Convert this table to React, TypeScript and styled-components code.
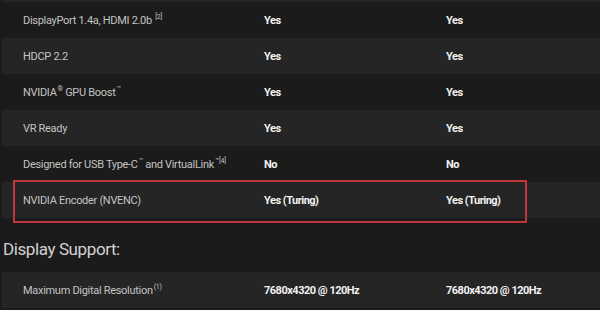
import React from 'react';
import styled, { createGlobalStyle } from 'styled-components';

const GlobalStyle = createGlobalStyle`
  html, body {
    margin: 0;
    padding: 0;
    background-color: #1b1b1b;
  }
  body {
    font-family: Roboto, "Liberation Sans", sans-serif;
    -webkit-font-smoothing: antialiased;
  }
`;

const Page = styled.div`
  width: 600px;
  height: 310px;
  overflow: hidden;
  background-color: #1b1b1b;
  padding-top: 2px;
  box-sizing: border-box;
  position: relative;
`;

const TopStrip = styled.div`
  position: absolute;
  top: 0;
  left: 2px;
  right: 0;
  height: 3px;
  background-color: #252525;
`;

const Table = styled.div`
  display: flex;
  flex-direction: column;
  padding-left: 2px;
`;

const Row = styled.div<{ $shaded?: boolean; $highlight?: boolean }>`
  position: relative;
  display: grid;
  grid-template-columns: 241px 182px 1fr;
  align-items: center;
  height: 36px;
  padding-left: 21px;
  background-color: ${({ $shaded }) => ($shaded ? '#252525' : '#1b1b1b')};
  ${({ $highlight }) => $highlight && `
    &::after {
      content: '';
      position: absolute;
      left: 11px;
      top: -2px;
      width: 510px;
      height: 39px;
      border: 2px solid #c4343b;
      pointer-events: none;
    }
  `}
`;

const Label = styled.div`
  color: #c3c3c3;
  font-size: 11px;
  letter-spacing: -0.3px;
  white-space: nowrap;
  sup {
    font-size: 7px;
    vertical-align: 5px;
    line-height: 0;
    margin-left: 1px;
  }
`;

const Value = styled.div`
  color: #f2f2f2;
  font-size: 11px;
  font-weight: 700;
  letter-spacing: -0.5px;
  white-space: nowrap;
`;

const Heading = styled.h2`
  margin: 0;
  height: 54px;
  box-sizing: border-box;
  padding: 7px 0 0 3px;
  display: flex;
  align-items: center;
  color: #d2d2d2;
  font-size: 17px;
  font-weight: 400;
  letter-spacing: -0.4px;
`;

type Spec = {
  label: React.ReactNode;
  a: string;
  b: string;
  highlight?: boolean;
};

const specs: Spec[] = [
  { label: <>DisplayPort 1.4a, HDMI 2.0b <sup>[2]</sup></>, a: 'Yes', b: 'Yes' },
  { label: 'HDCP 2.2', a: 'Yes', b: 'Yes' },
  { label: <>NVIDIA<sup>®</sup> GPU Boost<sup>™</sup></>, a: 'Yes', b: 'Yes' },
  { label: 'VR Ready', a: 'Yes', b: 'Yes' },
  { label: <>Designed for USB Type-C<sup>™</sup> and VirtualLink<sup>™[4]</sup></>, a: 'No', b: 'No' },
  { label: 'NVIDIA Encoder (NVENC)', a: 'Yes (Turing)', b: 'Yes (Turing)', highlight: true },
];

export default function App() {
  return (
    <Page>
      <GlobalStyle />
      <TopStrip />
      <Table>
        {specs.map((spec, i) => (
          <Row key={i} $shaded={i % 2 === 1} $highlight={spec.highlight}>
            <Label>{spec.label}</Label>
            <Value>{spec.a}</Value>
            <Value>{spec.b}</Value>
          </Row>
        ))}
      </Table>
      <Heading>Display Support:</Heading>
      <Table>
        <Row $shaded>
          <Label>Maximum Digital Resolution<sup>(1)</sup></Label>
          <Value>7680x4320 @ 120Hz</Value>
          <Value>7680x4320 @ 120Hz</Value>
        </Row>
      </Table>
    </Page>
  );
}
